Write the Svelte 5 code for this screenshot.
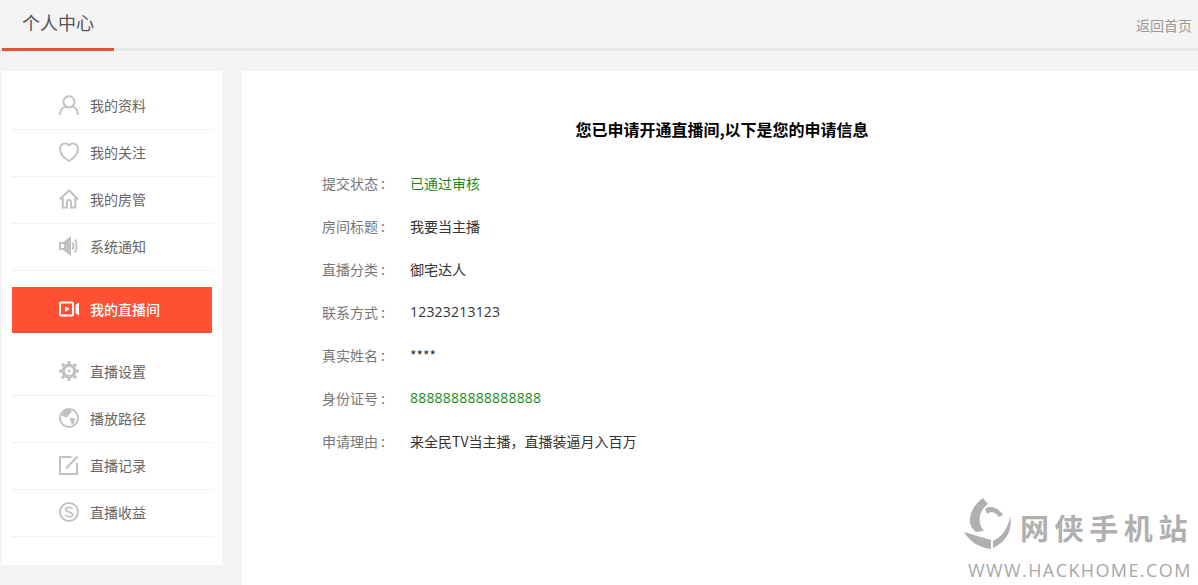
<script>
  const topItems = [
    { label: '我的资料', icon: 'user' },
    { label: '我的关注', icon: 'heart' },
    { label: '我的房管', icon: 'home' },
    { label: '系统通知', icon: 'sound' }
  ];
  const liveItems = [
    { label: '直播设置', icon: 'gear' },
    { label: '播放路径', icon: 'globe' },
    { label: '直播记录', icon: 'edit' },
    { label: '直播收益', icon: 'money' }
  ];
  const rows = [
    { name: '提交状态', value: '已通过审核', green: true },
    { name: '房间标题', value: '我要当主播' },
    { name: '直播分类', value: '御宅达人' },
    { name: '联系方式', value: '12323213123', num: true },
    { name: '真实姓名', value: '****' },
    { name: '身份证号', value: '8888888888888888', green: true, num: true },
    { name: '申请理由', value: '来全民TV当主播，直播装逼月入百万' }
  ];
</script>

{#snippet icon(name)}
  <svg class="icon" viewBox="0 0 20 20" width="20" height="20" fill="none" stroke="#c2c2c2" stroke-width="2">
    {#if name === 'user'}
      <circle cx="10" cy="6.8" r="5.6" />
      <path d="M1 20c0-4.500 3-7.600 5.600-8.600M19 20c0-4.500-3-7.600-5.600-8.600" />
    {:else if name === 'heart'}
      <path d="M10 19C5 16 1 12.500 1 7c0-3.200 2.300-5.500 5-5.500 1.600 0 3 .6 4 1.800 1-1.200 2.400-1.800 4-1.800 2.700 0 5 2.300 5 5.500 0 5.500-4 9-9 12z" />
    {:else if name === 'home'}
      <path d="M.8 10.500 10 1.500l9.200 9M3.800 9v9.500h4.200v-5.500a2 2 0 0 1 4 0v5.500h4.200V9" />
    {:else if name === 'sound'}
      <path d="M1 7v6h3.500L11 18V2L4.500 7z" />
      <path fill="#c2c2c2" stroke="none" d="M10 3v14L5 13V7z" />
      <path d="M13.500 6.500c1.200 2 1.200 5 0 7M15.800 3.500c2.400 3.800 2.400 9.200 0 13" />
    {:else if name === 'gear'}
      <circle cx="10" cy="10" r="5.700" stroke-width="3.400" />
      <circle cx="10" cy="10" r="1.300" fill="#c2c2c2" stroke="none" />
      <path stroke-width="3" d="M10 0v3M10 17v3M0 10h3M17 10h3M2.900 2.900 5 5M15 15l2.100 2.100M2.900 17.100 5 15M15 5l2.100-2.100" />
    {:else if name === 'globe'}
      <circle cx="10" cy="10" r="9" />
      <path fill="#c2c2c2" stroke="none" d="M5 2.500 11 1.500l2 2.500-3 2.500-1.500 3L6 9 2.500 7.500zM10.500 9.500l6 1-2.500 6.500-2-2z" />
    {:else if name === 'edit'}
      <path d="M12.500 2H1v17h17V8" />
      <path stroke-width="2" d="M7 13.500 18.500 1.500" />
    {:else if name === 'money'}
      <circle cx="10" cy="10" r="9" />
      <path stroke-width="1.600" d="M13.500 7c-.6-1.300-2-1.800-3.500-1.800-2 0-3.500 1-3.500 2.400 0 3.400 7.200 1.500 7.200 4.800 0 1.400-1.600 2.400-3.700 2.400-1.600 0-3.200-.6-3.800-2" />
    {:else if name === 'video'}
      <rect x="1" y="3.500" width="13" height="13" rx="1" stroke="#fff" stroke-width="2" />
      <path d="M6 7v6l4.500-3z" fill="#fff" stroke="none" />
      <path d="M20 3.500v13l-3.500-2.500v-8z" fill="#fff" stroke="none" />
    {/if}
  </svg>
{/snippet}

{#snippet menuItem(item)}
  <li class="item">
    {@render icon(item.icon)}
    <span>{item.label}</span>
  </li>
{/snippet}

<div class="page">
  <header class="top">
    <h2 class="tab">个人中心</h2>
    <a class="back" href="#home">返回首页</a>
  </header>

  <div class="body">
    <aside class="side">
      <ul class="menu">
        {#each topItems as item}
          {@render menuItem(item)}
        {/each}
      </ul>
      <div class="active">
        {@render icon('video')}
        <span>我的直播间</span>
      </div>
      <ul class="menu">
        {#each liveItems as item}
          {@render menuItem(item)}
        {/each}
      </ul>
    </aside>

    <main class="main">
      <h3 class="title">您已申请开通直播间,以下是您的申请信息</h3>
      <dl class="info">
        {#each rows as row}
          <div class="row">
            <dt>{row.name}<span class="colon">:</span></dt>
            <dd class:green={row.green} class:num={row.num}>{row.value}</dd>
          </div>
        {/each}
      </dl>
    </main>
  </div>

  <div class="mark">
    <div class="mark-top">
      <svg viewBox="0 0 60 60" width="60" height="60" fill="#b0b0b0">
        <path d="M23 4C14 10 9 20 10 29c1 4 3 7 6 9l8-1c-4-4-5-10-4-15 1-5 4-9 8-12z" />
        <path d="M4 38l27 8v9C20 54 10 48 4 38z" />
        <path d="M25 15c5-4 13-2 18 6l-4 2c-3-5-8-6-12-3z" />
        <path d="M50 23c3 13-4 25-17 31v-7c9-4 15-13 17-24z" />
      </svg>
      <div class="mark-cn">网侠手机站</div>
    </div>
    <div class="mark-en">WWW.HACKHOME.COM</div>
  </div>
</div>

<style>
  :global(body) {
    margin: 0;
    background: #f4f4f4;
  }

  .page {
    position: relative;
    height: 585px;
    overflow: hidden;
    font-family: "Noto Sans CJK SC", "Liberation Sans", sans-serif;
    font-size: 14px;
    color: #666;
  }

  .top {
    display: flex;
    justify-content: space-between;
    height: 48px;
    padding: 0 6px 0 2px;
    border-bottom: 3px solid #e8e8e8;
  }

  .tab {
    width: 112px;
    height: 51px;
    margin: 0;
    padding-left: 20px;
    box-sizing: border-box;
    border-bottom: 3px solid #e8503a;
    font-size: 18px;
    font-weight: 400;
    line-height: 44px;
    color: #555;
  }

  .back {
    margin-top: 15px;
    line-height: 20px;
    color: #999;
    text-decoration: none;
  }

  .body {
    display: flex;
    gap: 20px;
    margin-top: 20px;
    padding-left: 2px;
  }

  .side {
    width: 220px;
    height: 494px;
    padding: 12px 10px 0;
    box-sizing: border-box;
    background: #fff;
  }

  .menu {
    margin: 0;
    padding: 0;
    list-style: none;
  }

  .item {
    display: flex;
    align-items: center;
    gap: 11px;
    height: 44px;
    padding: 0 0 2px 47px;
    border-bottom: 1px dotted #e4e4e4;
  }

  .active {
    display: flex;
    align-items: center;
    gap: 11px;
    height: 44px;
    margin: 16px 0;
    padding: 0 0 2px 47px;
    background: #ff5033;
    color: #fff;
    font-weight: 500;
  }

  .icon {
    flex: none;
  }

  .main {
    flex: 1;
    height: 514px;
    padding-top: 47px;
    box-sizing: border-box;
    background: #fff;
  }

  .title {
    margin: 0 0 21px;
    padding-left: 4px;
    text-align: center;
    font-size: 16px;
    font-weight: 700;
    line-height: 22px;
    color: #000;
  }

  .info {
    margin: 0;
    padding-left: 80px;
  }

  .row {
    display: flex;
    align-items: center;
    height: 43px;
  }

  dt {
    width: 88px;
    color: #777;
  }

  .colon {
    margin-left: 3px;
  }

  dd {
    margin: 0;
    color: #333;
  }

  dd.green {
    color: #1e8a1e;
  }

  dd.num {
    font-family: "Open Sans", sans-serif;
    letter-spacing: .2px;
  }

  .mark {
    position: absolute;
    left: 960px;
    bottom: 5px;
  }

  .mark-top {
    display: flex;
    align-items: center;
  }

  .mark-cn {
    margin-top: 6px;
    font-size: 29px;
    font-weight: 700;
    line-height: 30px;
    letter-spacing: 5.6px;
    color: #b0b0b0;
    white-space: nowrap;
  }

  .mark-en {
    margin: 6px 0 0 8px;
    font-family: "Open Sans", sans-serif;
    font-size: 18px;
    line-height: 20px;
    letter-spacing: 1.4px;
    color: #a8a8a8;
    white-space: nowrap;
  }
</style>
